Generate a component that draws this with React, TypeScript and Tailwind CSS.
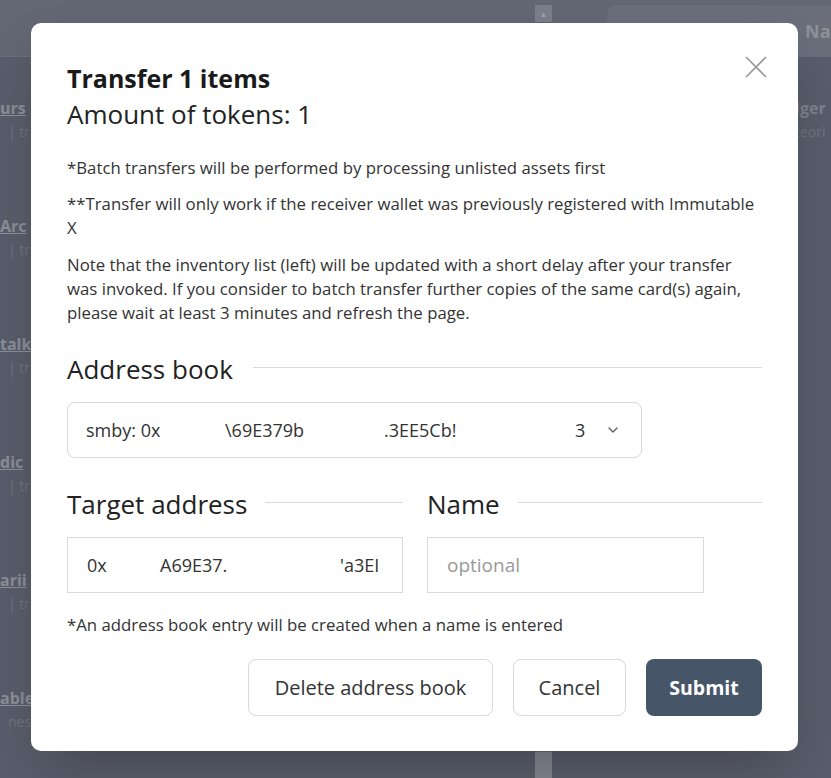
import React from 'react';

const bgItems = [
  { title: 'urs', sub: '| tri' },
  { title: 'Arc', sub: '| tri' },
  { title: 'talk', sub: '| tri' },
  { title: 'dic', sub: '| tri' },
  { title: 'arii', sub: '| tri' },
  { title: 'able', sub: 'nesis' },
];

const SectionTitle: React.FC<{ label: string; gap?: string }> = ({ label, gap = 'gap-5' }) => (
  <div className={`flex items-center ${gap}`}>
    <h3 className="text-[26px] leading-[34px] text-[#222] whitespace-nowrap">{label}</h3>
    <div className="flex-1 h-px bg-[#d9d9d9] mt-[-3px]" />
  </div>
);

const App: React.FC = () => {
  return (
    <div className="relative w-[831px] h-[778px] overflow-hidden bg-[#595d6b]" style={{ fontFamily: '"Open Sans", "Noto Sans", sans-serif' }}>
      {/* page behind the dim */}
      <div className="h-[57px] bg-[#636774] border-b border-[#6b6f7c]" />
      <div className="absolute left-[535px] top-[5px] w-[17px] h-[773px] bg-[#5f6370]">
        <div className="h-[17px] bg-[#7a7e89] flex items-center justify-center text-[8px] leading-none text-[#9a9ea7]">▲</div>
        <div className="absolute bottom-0 left-0 w-full h-[26px] bg-[#82858e]" />
      </div>
      <div className="absolute left-[607px] top-[5px] w-[230px] h-[52px] rounded-l-[10px] bg-[#6a6e7a] flex items-center pl-[198px]">
        <span className="font-bold text-[18px] text-[#8d919a]">Na</span>
      </div>
      <div className="absolute left-[795px] top-[96px] text-[#7d818b] font-bold text-[16px] leading-6">
        <div>iger</div>
        <div className="font-normal text-[14px] text-[#6f737e]">teori</div>
      </div>
      <div className="absolute left-0 top-[96px] flex flex-col gap-[70px]">
        {bgItems.map((it, i) => (
          <div key={i} className="text-[16px] leading-6 w-[31px] overflow-hidden">
            <div className="font-bold underline text-[#8a8e97] whitespace-nowrap">{it.title}</div>
            <div className="text-[#6f737e] text-[14px] whitespace-nowrap pl-[8px]">{it.sub}</div>
          </div>
        ))}
      </div>

      {/* modal */}
      <div className="absolute left-[31px] top-[23px] w-[767px] h-[728px] bg-white rounded-[10px] shadow-2xl px-9 pt-[38px] pb-[35px] flex flex-col">
        <button className="absolute right-[30px] top-[32px] text-[#999]">
          <svg width="24" height="24" viewBox="0 0 24 24" fill="none" stroke="currentColor" strokeWidth="1.6">
            <path d="M2 2L22 22M22 2L2 22" />
          </svg>
        </button>
        <h2 className="text-[25px] leading-[34px] font-bold text-[#1a1a1a]">Transfer 1 items</h2>
        <p className="mt-[2px] text-[26px] leading-[34px] text-[#222]">Amount of tokens: 1</p>

        <div className="mt-[25px] text-[16.8px] leading-6 text-[#333]">
          <p>*Batch transfers will be performed by processing unlisted assets first</p>
          <p className="mt-3">**Transfer will only work if the receiver wallet was previously registered with Immutable X</p>
          <p className="mt-[13px]">Note that the inventory list (left) will be updated with a short delay after your transfer was invoked. If you consider to batch transfer further copies of the same card(s) again, please wait at least 3 minutes and refresh the page.</p>
        </div>

        <div className="mt-[27px]">
          <SectionTitle label="Address book" />
        </div>
        <div className="mt-[16px] w-[575px] h-[56px] border border-[#d9d9d9] rounded-[8px] flex items-center pl-[18px] pr-[20px] text-[18px] text-[#333]">
          <span className="w-[139px] whitespace-nowrap">smby: 0x</span>
          <span className="w-[159px] whitespace-nowrap">\69E379b</span>
          <span className="w-[191px] whitespace-nowrap">.3EE5Cb!</span>
          <span>3</span>
          <svg className="ml-auto" width="16" height="16" viewBox="0 0 24 24" fill="none" stroke="#666" strokeWidth="2.2" strokeLinecap="round" strokeLinejoin="round">
            <path d="M6 9l6 6 6-6" />
          </svg>
        </div>

        <div className="mt-[29px] flex gap-6">
          <div className="w-[336px] flex flex-col">
            <SectionTitle label="Target address" gap="gap-[18px]" />
            <div className="mt-[16px] h-[56px] border border-[#d9d9d9] flex items-center pl-[19px] text-[18px] text-[#333]">
              <span className="w-[73px]">0x</span>
              <span className="w-[180px]">A69E37.</span>
              <span>'a3EI</span>
            </div>
          </div>
          <div className="flex-1 flex flex-col">
            <SectionTitle label="Name" gap="gap-[18px]" />
            <input
              placeholder="optional"
              className="mt-[16px] w-[277px] h-[56px] border border-[#d9d9d9] px-[19px] text-[19px] text-[#333] placeholder:text-[#999] outline-none"
            />
          </div>
        </div>

        <p className="mt-[20px] text-[16.8px] leading-6 text-[#333]">*An address book entry will be created when a name is entered</p>

        <div className="mt-auto flex justify-end gap-5">
          <button className="w-[245px] h-[57px] border border-[#d9d9d9] rounded-[8px] text-[20px] text-[#333]">Delete address book</button>
          <button className="w-[113px] h-[57px] border border-[#d9d9d9] rounded-[8px] text-[20px] text-[#333]">Cancel</button>
          <button className="w-[116px] h-[57px] rounded-[8px] bg-[#475569] text-white text-[19.5px] font-bold">Submit</button>
        </div>
      </div>
    </div>
  );
};

export default App;
